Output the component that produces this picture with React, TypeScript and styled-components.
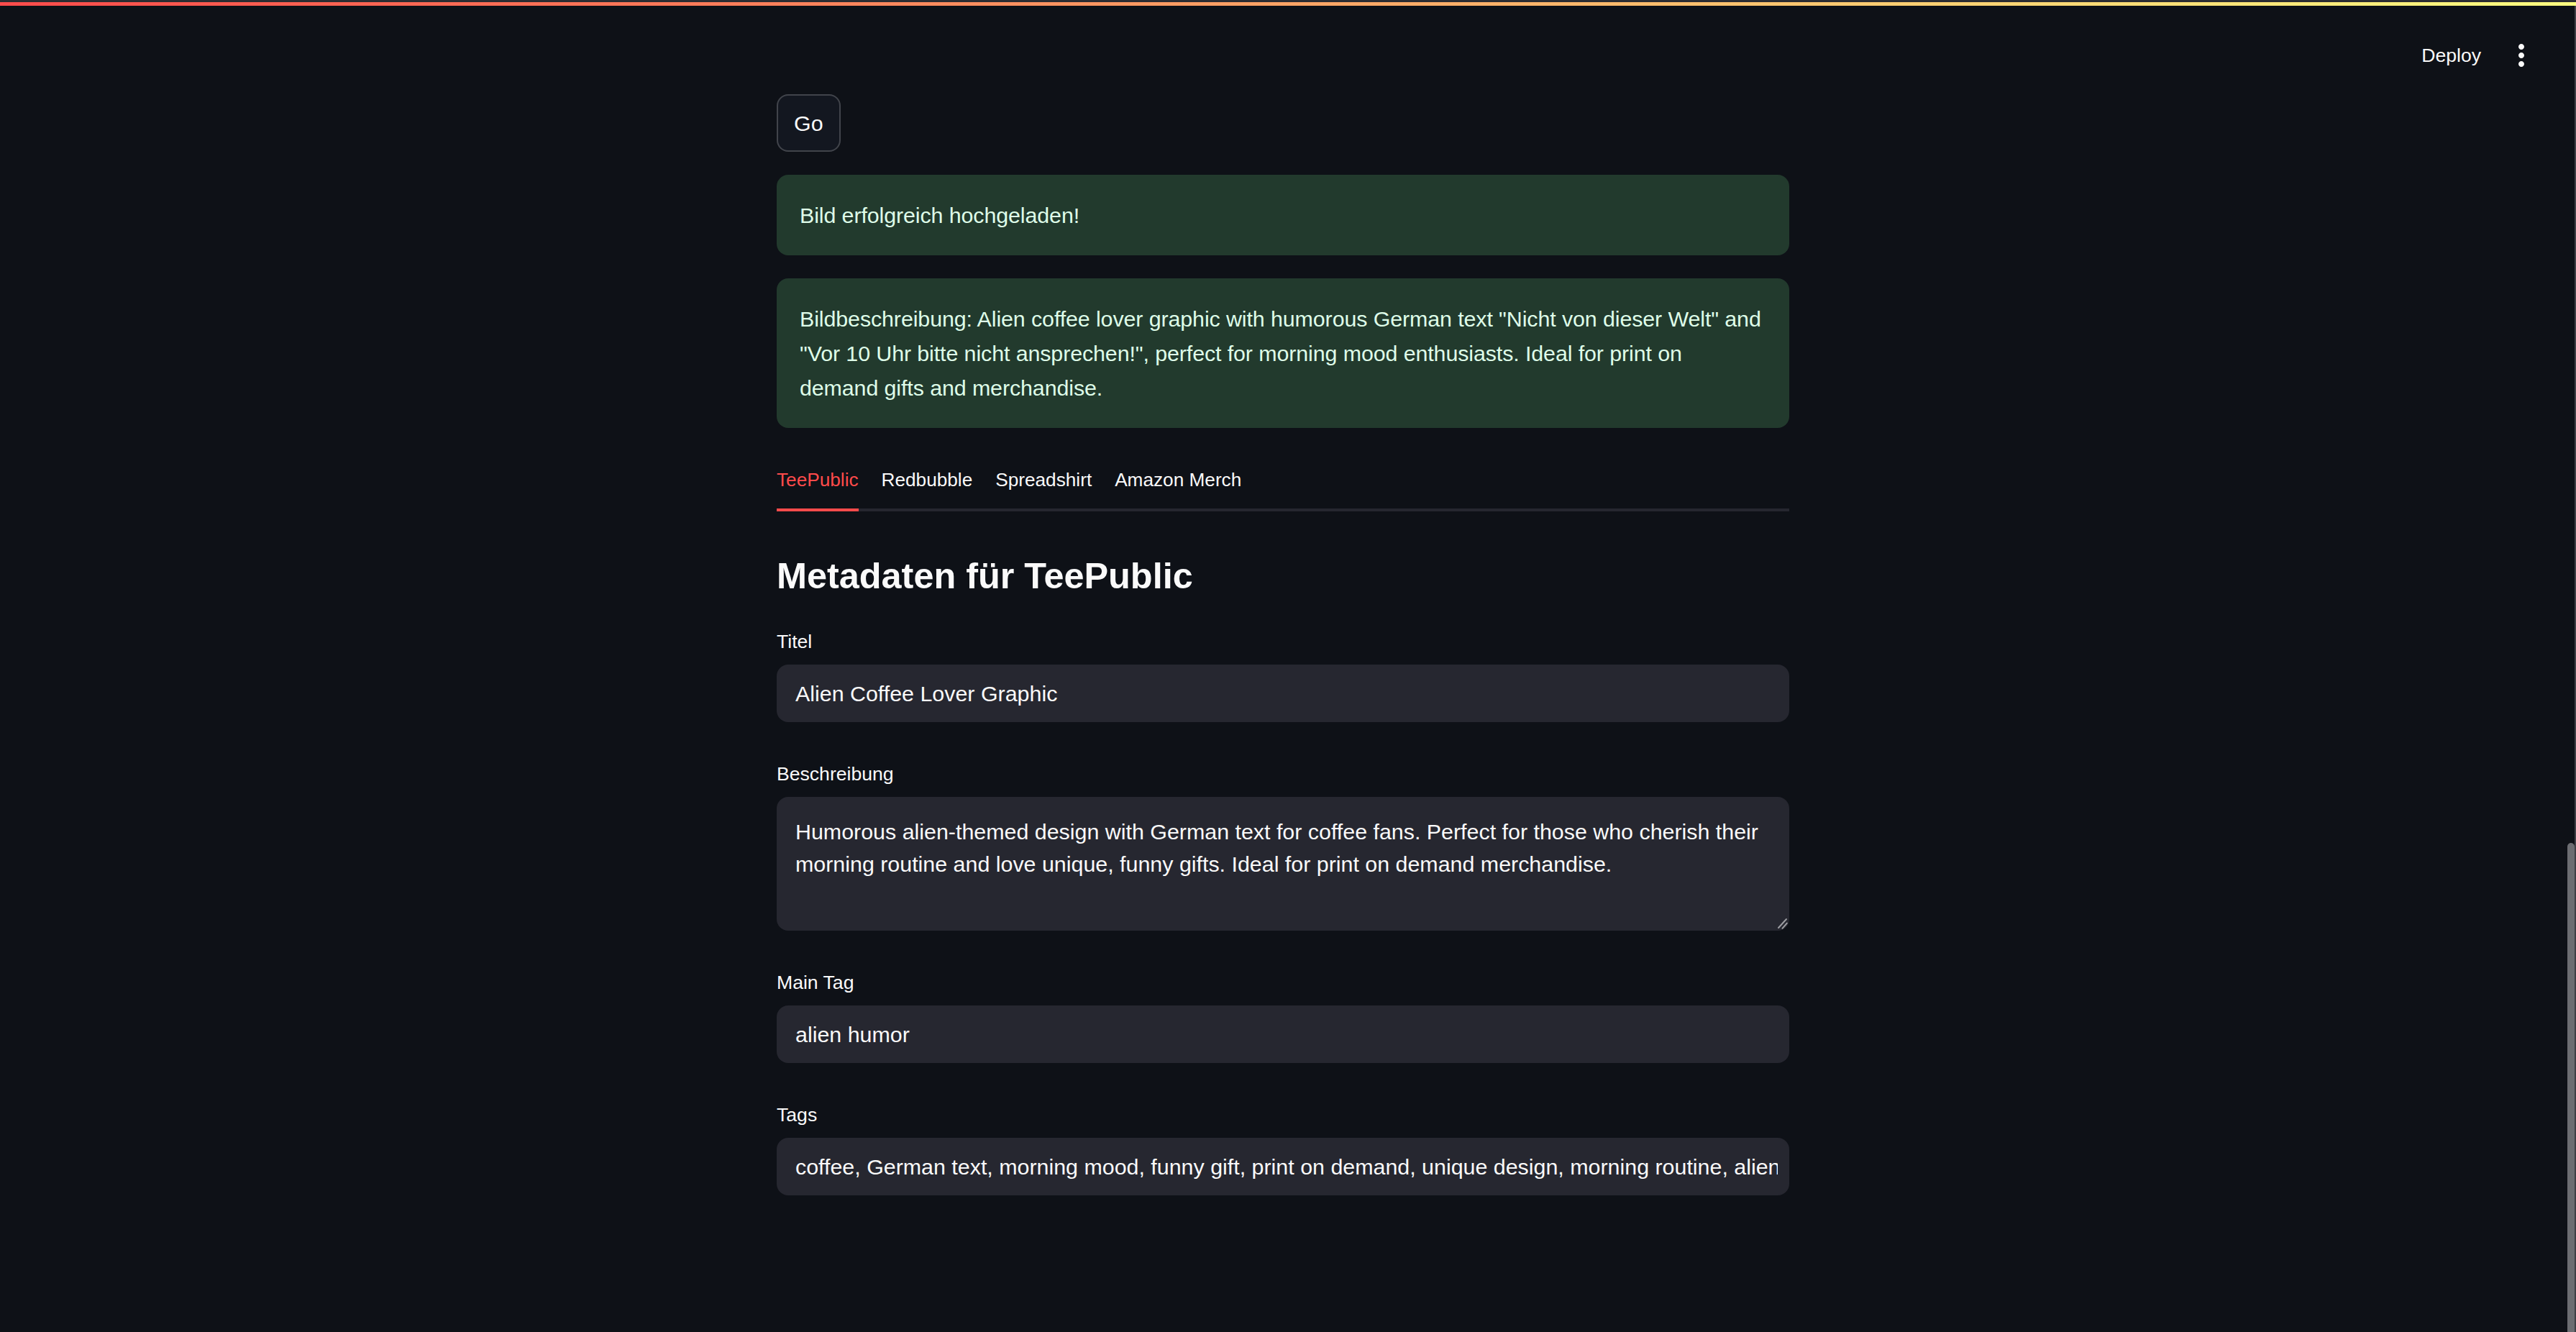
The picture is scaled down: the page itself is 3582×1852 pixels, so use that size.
import React from "react";
import styled, { createGlobalStyle } from "styled-components";

const GlobalStyle = createGlobalStyle`
  html, body {
    margin: 0;
    padding: 0;
    background: #0e1117;
    color-scheme: dark;
  }
  * { box-sizing: border-box; }
`;

const FONT = `"Liberation Sans", Arial, sans-serif`;

const Page = styled.div`
  zoom: 2;
  width: 1791px;
  height: 926px;
  display: flex;
  flex-direction: column;
  background: #0e1117;
  overflow: hidden;
  font-family: ${FONT};
  color: #fafafa;
`;

const BrowserEdge = styled.div`
  height: 1.5px;
  flex-shrink: 0;
  background: #2c2d32;
`;

const Decoration = styled.div`
  height: 2.5px;
  flex-shrink: 0;
  background: linear-gradient(90deg, #ff4b4b, #fffd80);
`;

const Body = styled.div`
  flex: 1;
  display: flex;
  min-height: 0;
`;

const Main = styled.main`
  flex: 1;
  min-width: 0;
  display: flex;
  flex-direction: column;
`;

const Toolbar = styled.header`
  height: 56px;
  flex-shrink: 0;
  padding: 13px 19px 0 0;
  display: flex;
  align-items: center;
  justify-content: flex-end;
  gap: 4px;
`;

const DeployButton = styled.button`
  background: transparent;
  border: none;
  color: #fafafa;
  font-family: ${FONT};
  font-size: 13.3px;
  line-height: 22px;
  padding: 4px 12px;
  cursor: pointer;
`;

const MenuButton = styled.button`
  width: 24px;
  height: 24px;
  padding: 0;
  border: none;
  background: transparent;
  color: #fafafa;
  display: flex;
  align-items: center;
  justify-content: center;
`;

const Content = styled.div`
  width: 704px;
  margin: 0 auto;
  padding-top: 5.5px;
  display: flex;
  flex-direction: column;
  gap: 16px;
`;

const GoButton = styled.button`
  align-self: flex-start;
  height: 40px;
  padding: 0 11px;
  border: 1px solid rgba(250, 250, 250, 0.2);
  border-radius: 8px;
  background: #131720;
  color: #fafafa;
  font-family: ${FONT};
  font-size: 15.2px;
  cursor: pointer;
`;

const Alert = styled.div`
  background: #223a2d;
  color: #dffde9;
  border-radius: 8px;
  padding: 16px;
  font-size: 15.2px;
  line-height: 24px;
  letter-spacing: -0.05px;
`;

const TabList = styled.div`
  display: flex;
  gap: 16px;
  border-bottom: 2px solid #262730;
`;

const Tab = styled.button<{ $active?: boolean }>`
  height: 42px;
  margin-bottom: -2px;
  padding: 0;
  border: none;
  border-bottom: 2px solid ${(p) => (p.$active ? "#ff4b4b" : "transparent")};
  background: transparent;
  color: ${(p) => (p.$active ? "#ff4b4b" : "#fafafa")};
  font-family: ${FONT};
  font-size: 13.1px;
  cursor: pointer;
`;

const Panel = styled.section`
  padding-top: 16px;
  display: flex;
  flex-direction: column;
`;

const Heading = styled.h3`
  margin: 0;
  padding: 14px 0 18.5px;
  font-size: 25.2px;
  line-height: 30px;
  font-weight: 700;
  color: #fafafa;
`;

const Fields = styled.div`
  display: flex;
  flex-direction: column;
  gap: 24px;
`;

const Field = styled.div`
  position: relative;
  display: flex;
  flex-direction: column;
`;

const Label = styled.label`
  min-height: 24px;
  padding-top: 1px;
  margin-bottom: 4px;
  font-size: 13.3px;
  line-height: 22px;
  color: #fafafa;
`;

const TextInput = styled.input`
  height: 40px;
  width: 100%;
  padding: 0 8px 0 13px;
  border: none;
  border-radius: 8px;
  background: #262730;
  color: #fafafa;
  font-family: ${FONT};
  font-size: 15.2px;
  outline: none;
`;

const TextArea = styled.textarea`
  display: block;
  height: 93px;
  width: 100%;
  padding: 13px 13px;
  border: none;
  border-radius: 8px;
  background: #262730;
  color: #fafafa;
  font-family: ${FONT};
  font-size: 15.2px;
  line-height: 22.4px;
  resize: none;
  outline: none;
`;

const ResizeGrip = styled.svg`
  position: absolute;
  right: 0;
  bottom: 0;
  width: 9px;
  height: 9px;
  pointer-events: none;
`;

const ScrollTrack = styled.div`
  width: 7px;
  flex-shrink: 0;
  padding-left: 1px;
  border-right: 1px solid #3e3f45;
  display: flex;
  flex-direction: column;
`;

const ScrollThumb = styled.div`
  margin-top: 582px;
  flex: 1;
  width: 5px;
  border-radius: 3px 3px 0 0;
  background: #6c6d72;
`;

const tabs = ["TeePublic", "Redbubble", "Spreadshirt", "Amazon Merch"];

export default function App() {
  return (
    <>
      <GlobalStyle />
      <Page>
        <BrowserEdge />
        <Decoration />
        <Body>
          <Main>
            <Toolbar>
              <DeployButton>Deploy</DeployButton>
              <MenuButton aria-label="Menu">
                <svg width="24" height="24" viewBox="0 0 24 24" fill="currentColor">
                  <path d="M12 8c1.1 0 2-.9 2-2s-.9-2-2-2-2 .9-2 2 .9 2 2 2zm0 2c-1.1 0-2 .9-2 2s.9 2 2 2 2-.9 2-2-.9-2-2-2zm0 6c-1.1 0-2 .9-2 2s.9 2 2 2 2-.9 2-2-.9-2-2-2z" />
                </svg>
              </MenuButton>
            </Toolbar>
            <Content>
              <GoButton>Go</GoButton>
              <Alert>Bild erfolgreich hochgeladen!</Alert>
              <Alert>
                Bildbeschreibung: Alien coffee lover graphic with humorous German text "Nicht von dieser Welt" and
                "Vor 10 Uhr bitte nicht ansprechen!", perfect for morning mood enthusiasts. Ideal for print on demand
                gifts and merchandise.
              </Alert>
              <div>
                <TabList>
                  {tabs.map((t, i) => (
                    <Tab key={t} $active={i === 0}>
                      {t}
                    </Tab>
                  ))}
                </TabList>
                <Panel>
                  <Heading>Metadaten für TeePublic</Heading>
                  <Fields>
                    <Field>
                      <Label>Titel</Label>
                      <TextInput defaultValue="Alien Coffee Lover Graphic" />
                    </Field>
                    <Field>
                      <Label>Beschreibung</Label>
                      <TextArea defaultValue="Humorous alien-themed design with German text for coffee fans. Perfect for those who cherish their morning routine and love unique, funny gifts. Ideal for print on demand merchandise." />
                      <ResizeGrip viewBox="-9 -9 9 9">
                        <path d="M-7.5 -2 L-2 -8" stroke="#9c9da2" strokeWidth="1" strokeLinecap="round" />
                        <path d="M-4.8 -1.6 L-1.6 -5.2" stroke="#9c9da2" strokeWidth="1" strokeLinecap="round" />
                      </ResizeGrip>
                    </Field>
                    <Field>
                      <Label>Main Tag</Label>
                      <TextInput defaultValue="alien humor" />
                    </Field>
                    <Field>
                      <Label>Tags</Label>
                      <TextInput defaultValue="coffee, German text, morning mood, funny gift, print on demand, unique design, morning routine, alien humor, space" />
                    </Field>
                  </Fields>
                </Panel>
              </div>
            </Content>
          </Main>
          <ScrollTrack>
            <ScrollThumb />
          </ScrollTrack>
        </Body>
      </Page>
    </>
  );
}
